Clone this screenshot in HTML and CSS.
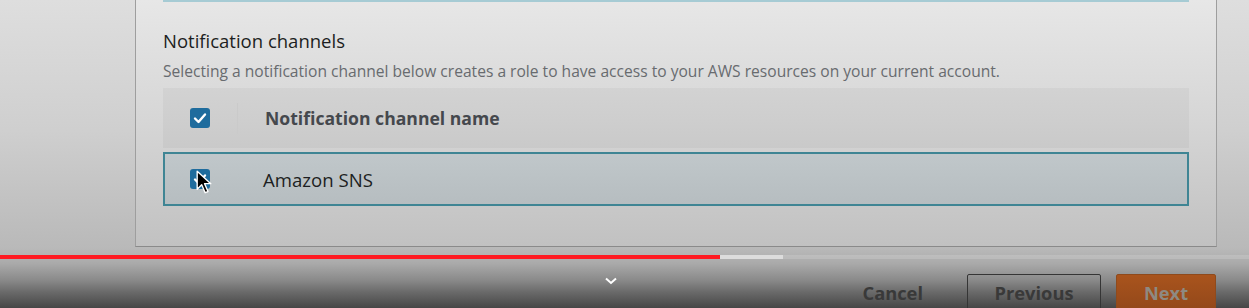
FILE: index.html
```html
<!DOCTYPE html>
<html lang="en">
<head>
	<meta charset="UTF-8">
	<title>Notification channels</title>
	<link rel="stylesheet" href="styles.css">
</head>
<body>
	<div class="page">
		<div class="card">
			<div class="prev-edge"></div>
			<h2 class="title">Notification channels</h2>
			<p class="desc">Selecting a notification channel below creates a role to have access to your AWS resources on your current account.</p>
			<div class="table">
				<div class="thead">
					<div class="cell-check"><span class="checkbox"><svg viewBox="0 0 20 20" width="20" height="20"><polyline points="5,10.5 8.5,14 15,6.5" fill="none" stroke="#fff" stroke-width="2.4" stroke-linecap="round" stroke-linejoin="round"/></svg></span></div>
					<div class="divider"></div>
					<div class="th">Notification channel name</div>
				</div>
				<div class="row selected">
					<div class="cell-check"><span class="checkbox"><svg viewBox="0 0 20 20" width="20" height="20"><polyline points="5,10.5 8.5,14 15,6.5" fill="none" stroke="#fff" stroke-width="2.4" stroke-linecap="round" stroke-linejoin="round"/></svg></span>
						<svg class="cursor" viewBox="0 0 14 22" width="16" height="25"><path d="M1 1 L1 17 L5 13 L8 20 L10.5 19 L7.5 12 L13 12 Z" fill="#000" stroke="#fff" stroke-width="1.2" stroke-linejoin="round"/></svg>
					</div>
					<div class="td">Amazon SNS</div>
				</div>
			</div>
		</div>
		<div class="footer">
			<button class="btn link">Cancel</button>
			<button class="btn normal">Previous</button>
			<button class="btn primary">Next</button>
		</div>
	</div>

	<div class="progress">
		<div class="loaded"></div>
		<div class="played"></div>
	</div>
	<svg class="chevron" viewBox="0 0 14 8" width="14" height="8"><polyline points="2,1.5 7,6 12,1.5" fill="none" stroke="#fff" stroke-width="2"/></svg>
</body>
</html>
```
FILE: styles.css
```css
* {
	margin: 0;
	padding: 0;
	box-sizing: border-box;
}
html,body {
	width: 100%;
	height: 308px;
	overflow: hidden;
}
body {
	position: relative;
	font-family: "Open Sans", "Liberation Sans", sans-serif;
	background: linear-gradient(to bottom, #dedede 0, #cfcfcf 130px, #b9b9b9 248px, #b2b2b2 256px, #a9a9a9 264px, #8a8a8a 280px, #6a6a6a 292px, #464646 308px);
}
.page {
	padding: 0 33px 0 135px;
}
.card {
	width: 1082px;
	padding: 0 27px 40px;
	background: linear-gradient(to bottom, #e7e7e7 0, #d6d6d6 120px, #c1c1c1 247px);
	border: 1px solid #9e9e9e;
	border-top: none;
	border-bottom-color: #8a8a8a;
}
.prev-edge {
	height: 2px;
	background: #a6cbd4;
}
.title {
	margin-top: 27px;
	color: #1c1e21;
	font-size: 18.5px;
	font-weight: normal;
	line-height: 24px;
}
.desc {
	margin-top: 8px;
	color: #686b6f;
	font-size: 15.6px;
	line-height: 20px;
}
.table {
	margin-top: 7px;
}
.thead {
	display: flex;
	align-items: center;
	height: 60px;
	background: rgba(0,0,0,.035);
}
.cell-check {
	position: relative;
	width: 74px;
	padding-left: 27px;
	display: flex;
	align-items: center;
}
.checkbox {
	display: block;
	width: 20px;
	height: 20px;
	background: #1f6c9d;
	border-radius: 3px;
}
.checkbox svg {
	display: block;
}
.divider {
	width: 1px;
	height: 31px;
	background: #cacaca;
}
.th {
	padding-left: 27px;
	color: #45484d;
	font-size: 17.6px;
	font-weight: bold;
}
.row {
	display: flex;
	align-items: center;
	height: 54px;
	margin-top: 4px;
	background: linear-gradient(to bottom, #c0c7ca, #b6bdc0);
	border: 2px solid #3f8594;
}
.row .cell-check {
	padding-left: 25px;
	width: 98px;
}
.td {
	color: #1d1f22;
	font-size: 18.6px;
}
.cursor {
	position: absolute;
	left: 31px;
	top: 1px;
}
.footer {
	display: flex;
	justify-content: flex-end;
	align-items: center;
	gap: 15px;
	padding-top: 27px;
}
.btn {
	height: 36px;
	font-family: "Open Sans", "Liberation Sans", sans-serif;
	font-size: 18.3px;
	font-weight: bold;
	border-radius: 2px;
	background: transparent;
	border: 1px solid transparent;
	cursor: pointer;
}
.btn.link {
	color: #393939;
	padding: 0 20px;
	margin-right: 8px;
}
.btn.normal {
	width: 134px;
	color: #393939;
	border-color: #353535;
}
.btn.primary {
	width: 100px;
	color: #8e8a82;
	background: linear-gradient(to bottom, #a9541d, #93481a);
	border-color: #8f4a1c;
}
.progress {
	position: absolute;
	left: 0;
	right: 0;
	top: 255px;
	height: 4px;
	background: rgba(255,255,255,.15);
}
.progress .loaded {
	position: absolute;
	left: 0;
	top: 0;
	width: 783px;
	height: 100%;
	background: #dcdcdc;
}
.progress .played {
	position: absolute;
	left: 0;
	top: 0;
	width: 720px;
	height: 100%;
	background: #ff1a22;
}
.chevron {
	position: absolute;
	left: 604px;
	top: 277px;
}
```
